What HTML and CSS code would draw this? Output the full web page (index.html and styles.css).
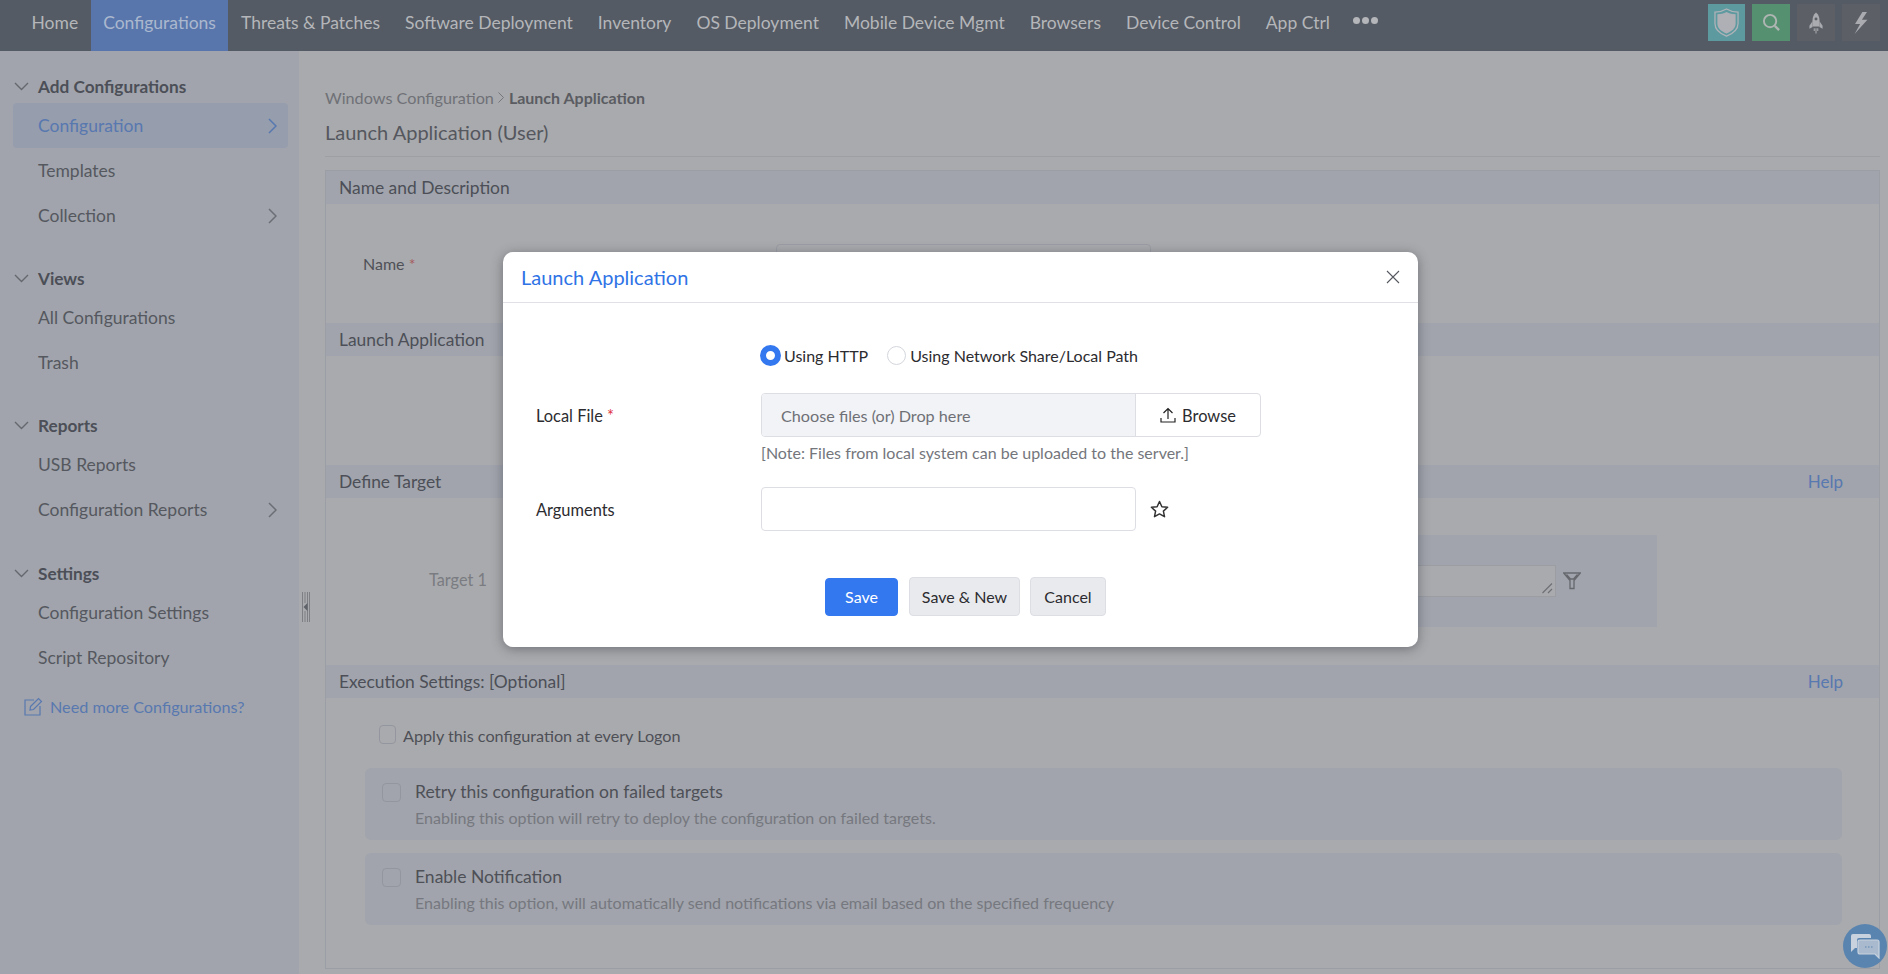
FILE: index.html
```html
<!DOCTYPE html>
<html lang="en">
<head>
<meta charset="utf-8">
<title>Launch Application</title>
<link rel="stylesheet" href="styles.css">
</head>
<body>
<header class="topbar">
  <nav class="nav">
    <a class="nav-item">Home</a>
    <a class="nav-item active">Configurations</a>
    <a class="nav-item">Threats &amp; Patches</a>
    <a class="nav-item">Software Deployment</a>
    <a class="nav-item">Inventory</a>
    <a class="nav-item">OS Deployment</a>
    <a class="nav-item">Mobile Device Mgmt</a>
    <a class="nav-item">Browsers</a>
    <a class="nav-item">Device Control</a>
    <a class="nav-item">App Ctrl</a>
    <span class="dots"><i></i><i></i><i></i></span>
  </nav>
  <div class="tiles">
    <span class="tile tile-shield"><svg width="25" height="29" viewBox="0 0 26 32" preserveAspectRatio="none"><path d="M13 1 C9 3.500 5 4.500 1 4.500 V17 C1 24 7 28.500 13 31 C19 28.500 25 24 25 17 V4.500 C21 4.500 17 3.500 13 1 Z" fill="none" stroke="#b0b3b8" stroke-width="1.300"/><path d="M13 4.500 C10 6 7 7 3.500 7 V17 C3.500 22.500 8 26 13 28 C18 26 22.500 22.500 22.500 17 V7 C19 7 16 6 13 4.500 Z" fill="#aeb0b5"/></svg></span>
    <span class="tile tile-search"><svg width="19" height="19" viewBox="0 0 20 20"><circle cx="8.500" cy="8.500" r="6.500" fill="none" stroke="#aeb5b2" stroke-width="2"/><path d="M13.500 13.500 L18 18" stroke="#aeb5b2" stroke-width="2.400"/></svg></span>
    <span class="tile tile-dark"><svg width="14" height="22" viewBox="0 0 16 24"><path d="M8 0 C5 2.500 4 6 4 9 V16 H12 V9 C12 6 11 2.500 8 0 Z" fill="#a9abb0"/><path d="M4 10 L0.500 15 V18.500 L4 16.500 Z M12 10 L15.500 15 V18.500 L12 16.500 Z" fill="#a9abb0"/><circle cx="8" cy="7.500" r="1.700" fill="#5d5f67"/><path d="M6 18 V21 M8 18 V24 M10 18 V21" stroke="#a9abb0" stroke-width="1.200"/></svg></span>
    <span class="tile tile-dark"><svg width="14" height="22" viewBox="0 0 15 24"><path d="M9 0 L1 13 H6.500 L0.500 24 L14.500 8.500 H8.500 L14 0 Z" fill="#a9abb0"/></svg></span>
  </div>
</header>

<div class="layout">
  <aside class="sidebar">
    <section class="group">
      <h3 class="group-title"><svg class="chev-down" width="15" height="9" viewBox="0 0 15 9"><path d="M1 1 L7.500 7.500 L14 1"/></svg>Add Configurations</h3>
      <a class="side-item selected">Configuration<svg class="chev-right" width="9" height="16" viewBox="0 0 9 16"><path d="M1 1 L8 8 L1 15"/></svg></a>
      <a class="side-item">Templates</a>
      <a class="side-item">Collection<svg class="chev-right" width="9" height="16" viewBox="0 0 9 16"><path d="M1 1 L8 8 L1 15"/></svg></a>
    </section>
    <section class="group">
      <h3 class="group-title"><svg class="chev-down" width="15" height="9" viewBox="0 0 15 9"><path d="M1 1 L7.500 7.500 L14 1"/></svg>Views</h3>
      <a class="side-item">All Configurations</a>
      <a class="side-item">Trash</a>
    </section>
    <section class="group">
      <h3 class="group-title"><svg class="chev-down" width="15" height="9" viewBox="0 0 15 9"><path d="M1 1 L7.500 7.500 L14 1"/></svg>Reports</h3>
      <a class="side-item">USB Reports</a>
      <a class="side-item">Configuration Reports<svg class="chev-right" width="9" height="16" viewBox="0 0 9 16"><path d="M1 1 L8 8 L1 15"/></svg></a>
    </section>
    <section class="group group-settings">
      <h3 class="group-title"><svg class="chev-down" width="15" height="9" viewBox="0 0 15 9"><path d="M1 1 L7.500 7.500 L14 1"/></svg>Settings</h3>
      <a class="side-item">Configuration Settings</a>
      <a class="side-item">Script Repository</a>
    </section>
    <a class="need-more"><svg width="19" height="19" viewBox="0 0 19 19"><path d="M10 3 H1 V18 H16 V9" fill="none" stroke="#5878b0" stroke-width="1.200"/><path d="M6.500 9.500 L14.500 1.500 L17.500 4.500 L9.500 12.500 L6 13 Z" fill="none" stroke="#5878b0" stroke-width="1.200"/></svg>Need more Configurations?</a>
  </aside>

  <main class="main">
    <div class="crumbs">Windows Configuration<svg class="crumb-sep" width="6" height="11" viewBox="0 0 6 11"><path d="M0.500 0.500 L5.500 5.500 L0.500 10.500"/></svg><b>Launch Application</b></div>
    <h1 class="page-title">Launch Application (User)</h1>
    <div class="panel">
      <div class="section-head">Name and Description</div>
      <div class="section-body body-name">
        <label class="field-label">Name <span class="req">*</span></label>
        <div class="ghost-input"></div>
      </div>
      <div class="section-head">Launch Application</div>
      <div class="section-body body-launch"></div>
      <div class="section-head">Define Target<a class="help">Help</a></div>
      <div class="section-body body-target">
        <span class="target-label">Target 1</span>
        <div class="target-box">
          <div class="target-area"><svg width="11" height="11" viewBox="0 0 11 11"><path d="M0.500 10 L10 0.500 M6 10 L10 6" stroke="#6d6f75" stroke-width="1.100"/></svg></div>
          <svg class="filter" width="18" height="18" viewBox="0 0 18 18"><path d="M0.700 1 H17.300 L11 8.500 V16.500 H7 V8.500 Z M3.500 2.500 L7.500 7 H10.500 L14.500 2.500" fill="none" stroke="#66686e" stroke-width="1.300"/></svg>
        </div>
      </div>
      <div class="section-head">Execution Settings: [Optional]<a class="help">Help</a></div>
      <div class="section-body body-exec">
        <div class="apply-row"><span class="check check-apply"></span>Apply this configuration at every Logon</div>
        <div class="option">
          <span class="check"></span>
          <div>
            <div class="option-title">Retry this configuration on failed targets</div>
            <div class="option-sub">Enabling this option will retry to deploy the configuration on failed targets.</div>
          </div>
        </div>
        <div class="option">
          <span class="check"></span>
          <div>
            <div class="option-title">Enable Notification</div>
            <div class="option-sub">Enabling this option, will automatically send notifications via email based on the specified frequency</div>
          </div>
        </div>
      </div>
    </div>
  </main>
</div>

<div class="collapse-handle"><svg width="8" height="30" viewBox="0 0 8 30"><path d="M0.500 0 V30 M3 0 V11 M3 19 V30 M5.500 0 V30 M7.500 0 V30" stroke="#6a6d74" stroke-width="0.700"/><path d="M5.500 11 L1.500 15 L5.500 19 Z" fill="#5f6269"/></svg></div>

<div class="modal">
  <div class="modal-head">
    <h2 class="modal-title">Launch Application</h2>
    <svg class="modal-close" width="14" height="14" viewBox="0 0 14 14"><path d="M1 1 L13 13 M13 1 L1 13"/></svg>
  </div>
  <div class="modal-body">
    <div class="radios">
      <span class="radio radio-on"></span><span class="radio-text">Using HTTP</span>
      <span class="radio radio-off"></span><span class="radio-text">Using Network Share/Local Path</span>
    </div>
    <div class="form-row row-file">
      <label class="form-label">Local File <span class="req-strong">*</span></label>
      <div class="file-input">
        <span class="file-drop">Choose files (or) Drop here</span>
        <span class="file-browse"><svg width="16" height="16" viewBox="0 0 16 16"><path d="M8 12 V1.500 M3.500 6 L8 1.500 L12.500 6 M1 11 V15 H15 V11" fill="none" stroke="#222" stroke-width="1.200"/></svg>Browse</span>
      </div>
    </div>
    <p class="note">[Note: Files from local system can be uploaded to the server.]</p>
    <div class="form-row row-args">
      <label class="form-label">Arguments</label>
      <div class="text-input"></div>
      <svg class="star" width="19" height="18" viewBox="0 0 19 18"><path d="M9.500 1.500 L11.900 6.700 L17.600 7.300 L13.400 11.100 L14.500 16.700 L9.500 13.900 L4.500 16.700 L5.600 11.100 L1.400 7.300 L7.100 6.700 Z" fill="none" stroke="#333" stroke-width="1.500" stroke-linejoin="round"/></svg>
    </div>
    <div class="actions">
      <button class="btn btn-primary">Save</button>
      <button class="btn btn-new">Save &amp; New</button>
      <button class="btn btn-cancel">Cancel</button>
    </div>
  </div>
</div>

<div class="chat"><svg width="30" height="26" viewBox="0 0 30 26"><path d="M3 1 H19 Q21 1 21 3 V5 H9 Q7 5 7 7 V15 H5 L1 19 V3 Q1 1 3 1 Z" fill="#c7d2de"/><path d="M10 7 H27 Q29 7 29 9 V25 L25 21 H10 Q8 21 8 19 V9 Q8 7 10 7 Z" fill="#a9bace" stroke="#c7d2de" stroke-width="1.200"/><path d="M15 14 H16.500 M18 14 H19.500 M21 14 H22.500" stroke="#5d83b0" stroke-width="1.200"/></svg></div>
</body>
</html>
```

FILE: styles.css
```css
* { box-sizing: border-box; }
html, body { margin: 0; height: 974px; overflow: hidden; }
body {
  background: #a9aaad;
  color: #4e5057;
  font-family: Lato, "Noto Sans", sans-serif;
  font-size: 16px;
  position: relative;
}
h1, h2, h3, p { margin: 0; font-weight: 400; }

/* top bar */
.topbar { height: 51px; background: #555b64; display: flex; justify-content: space-between; }
.nav { display: flex; align-items: stretch; padding-left: 19px; }
.nav-item { display: flex; align-items: center; padding: 0 12.5px 6px; font-size: 17.500px; color: #b4b6ba; white-space: nowrap; }
.nav-item.active { background: #5876ac; color: #abb8ce; }
.dots { display: flex; align-items: center; gap: 2px; margin-left: 11px; padding-bottom: 11px; }
.dots i { width: 7px; height: 7px; border-radius: 50%; background: #b4b6ba; }
.tiles { display: flex; gap: 7px; padding: 4px 8px 0 0; height: 41px; }
.tile { width: 38px; height: 37px; display: flex; align-items: center; justify-content: center; }
.tile-shield { background: #5d9aa0; width: 37px; }
.tile-search { background: #559170; }
.tile-dark { background: #5d5f67; }

/* layout */
.layout { display: flex; height: 923px; }
.sidebar { width: 299px; background: #a1a4ac; padding: 19px 11px 0 13px; flex: none; }
.group { margin-bottom: 24px; }
.group-settings { margin-bottom: 11px; }
.group-settings .group-title { height: 34px; }
.group-title { height: 33px; display: flex; align-items: center; font-size: 17.200px; font-weight: 700; color: #4c4f57; padding-left: 1px; }
.chev-down { margin-right: 9px; }
.chev-down path { fill: none; stroke: #65686f; stroke-width: 1.400; }
.side-item { height: 45px; display: flex; align-items: center; justify-content: space-between; padding: 0 11px 0 25px; font-size: 17.500px; color: #55585f; border-radius: 4px; }
.side-item.selected { background: #969dad; color: #5878b0; }
.chev-right path { fill: none; stroke: #6b6e75; stroke-width: 1.500; }
.selected .chev-right path { stroke: #5878b0; }
.need-more { display: flex; align-items: center; gap: 7px; font-size: 16.200px; color: #5878b0; padding-left: 11px; height: 30px; }

/* main */
.main { flex: 1; padding: 34px 8px 0 26px; min-width: 0; }
.crumbs { height: 24px; display: flex; align-items: center; font-size: 16.200px; color: #6f7177; }
.crumbs b { color: #5a5c62; font-weight: 700; font-size: 16px; }
.crumb-sep { margin: 0 5px 0 4px; }
.crumb-sep path { fill: none; stroke: #74767c; stroke-width: 1; }
.page-title { height: 48px; padding-bottom: 1px; display: flex; align-items: center; font-size: 20px; color: #55575e; border-bottom: 1px solid #9e9fa5; margin-bottom: 13px; }
.panel { border: 1px solid #9c9ea6; height: 799px; }
.section-head { height: 33px; background: #a1a4ac; display: flex; align-items: center; justify-content: space-between; padding: 0 36px 0 13px; font-size: 17.400px; color: #4c4f57; }
.help { color: #5878b0; font-size: 17px; }
.section-body { position: relative; }
.body-name { height: 119px; padding: 40px 0 0 38px; display: flex; align-items: flex-start; }
.field-label { font-size: 16px; color: #4f5158; width: 412px; margin-left: -1px; line-height: 40px; }
.req { color: #a65a5f; }
.ghost-input { width: 375px; height: 44px; margin-left: 1px; border: 1px solid #9c9ea6; border-radius: 4px; }
.body-launch { height: 109px; }
.body-target { height: 167px; display: flex; padding: 37px 0 0 103px; }
.target-label { width: 92px; line-height: 89px; font-size: 16.300px; color: #7a7c82; }
.target-box { width: 1136px; height: 92px; background: #a1a4ac; display: flex; align-items: center; justify-content: flex-end; padding: 0 76px 0 0; }
.target-area { width: 500px; height: 32px; border: 1px solid #9b9da3; background: #a9aaad; display: flex; align-items: flex-end; justify-content: flex-end; padding: 0 2px 2px 0; }
.filter { margin-left: 7px; }
.body-exec { padding: 27px 37px 0 39px; }
.apply-row { display: flex; align-items: center; font-size: 16.200px; color: #4e5057; height: 19px; padding: 2px 0 0 14px; margin-bottom: 24px; }
.check { display: block; width: 19px; height: 19px; border: 1px solid #93969f; border-radius: 4px; flex: none; margin: 1px 14px 0 0; }
.check-apply { width: 17px; margin: -2px 7px 0 0; }
.option { height: 72px; background: #a1a4ac; border-radius: 6px; display: flex; padding: 14px 17px; margin-bottom: 13px; }
.option-title { font-size: 17.500px; color: #4e5057; line-height: 20px; }
.option-sub { font-size: 16.050px; color: #76787f; line-height: 20px; margin-top: 6px; }

/* collapse handle */
.collapse-handle { position: absolute; left: 302px; top: 592px; width: 8px; height: 30px; }
.collapse-handle svg { display: block; }

/* modal */
.modal { position: absolute; left: 503px; top: 252px; width: 915px; height: 395px; background: #fff; border-radius: 10px; box-shadow: 0 2px 12px rgba(40, 44, 56, .45); color: #2c2c30; }
.modal-head { height: 51px; border-bottom: 1px solid #dfe1e7; display: flex; align-items: center; justify-content: space-between; padding: 0 18px; }
.modal-title { font-size: 20px; color: #2f73e6; }
.modal-close path { fill: none; stroke: #55585f; stroke-width: 1.100; }
.modal-body { padding: 41px 0 0 33px; }
.radios { display: flex; align-items: center; height: 22px; margin-left: 224px; font-size: 16px; color: #2c2c30; }
.radio { display: block; border-radius: 50%; flex: none; }
.radio-on { width: 21px; height: 21px; background: #fff; border: 6.500px solid #3478f0; margin-right: 3px; }
.radio-off { width: 19px; height: 19px; border: 1px solid #d4d6dc; margin: 0 4px 0 19px; }
.form-row { display: flex; align-items: center; }
.form-label { width: 225px; font-size: 16.400px; color: #2c2c30; }
.req-strong { color: #e0333c; }
.row-file { margin-top: 27px; }
.file-input { display: flex; width: 500px; height: 44px; border: 1px solid #dcdee4; border-radius: 4px; overflow: hidden; }
.file-drop { width: 374px; background: #f2f3f7; color: #6e7076; font-size: 16.200px; display: flex; align-items: center; padding-left: 19px; border-right: 1px solid #dcdee4; }
.file-browse { flex: 1; display: flex; align-items: center; justify-content: center; gap: 6px; font-size: 16.400px; color: #2c2c30; }
.note { margin: 6px 0 0 225px; font-size: 16px; line-height: 20px; color: #74767c; }
.row-args { margin-top: 24px; }
.text-input { width: 375px; height: 44px; border: 1px solid #dcdee4; border-radius: 4px; }
.star { margin-left: 14px; }
.actions { display: flex; gap: 10px; margin: 46px 0 0 289px; align-items: center; }
.btn { height: 39px; padding: 0; border: 1px solid #dcdee4; border-radius: 4px; background: #e9eaee; color: #2c2c30; font: 400 16px Lato, "Noto Sans", sans-serif; }
.btn-primary { width: 73px; height: 38px; background: #3478f0; border-color: #3478f0; color: #fff; margin-right: 1px; }
.btn-new { width: 111px; }
.btn-cancel { width: 76px; }

/* chat */
.chat { position: absolute; left: 1843px; top: 924px; width: 44px; height: 44px; border-radius: 50%; background: #5a84b0; display: flex; align-items: center; justify-content: center; }
```
